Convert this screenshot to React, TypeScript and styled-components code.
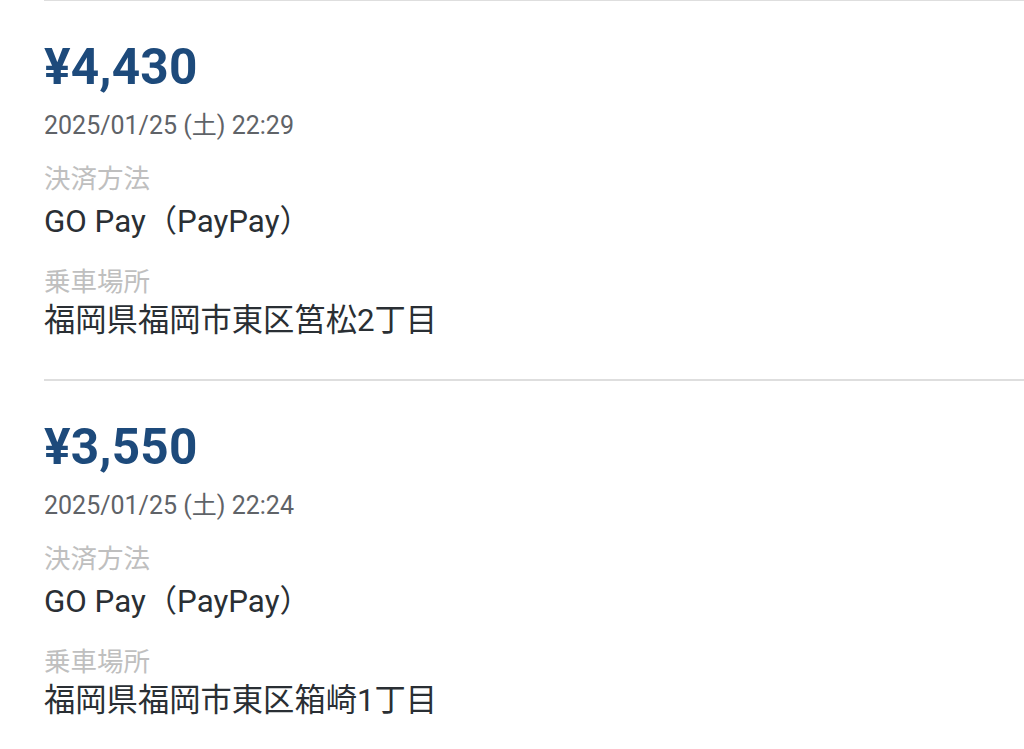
import React from "react";
import styled, { createGlobalStyle } from "styled-components";

const GlobalStyle = createGlobalStyle`
  html, body {
    margin: 0;
    padding: 0;
    background: #ffffff;
  }
  body {
    font-family: Roboto, "Noto Sans CJK JP", sans-serif;
    -webkit-font-smoothing: antialiased;
  }
`;

const List = styled.div`
  margin-left: 44px;
  border-top: 1px solid #dedede;
  display: flex;
  flex-direction: column;
`;

const Item = styled.section<{ $last?: boolean }>`
  display: flex;
  flex-direction: column;
  padding: 38px 0 40px;
  border-bottom: ${(p) => (p.$last ? "none" : "2px solid #dedede")};
`;

const Price = styled.div`
  font-size: 49.5px;
  line-height: 56px;
  font-weight: 700;
  color: #1d4a7b;
  letter-spacing: 0.2px;
`;

const DateText = styled.div`
  margin-top: 16px;
  font-size: 25px;
  line-height: 30px;
  color: #5f6368;
`;

const Label = styled.div<{ $gap: number }>`
  margin-top: ${(p) => p.$gap}px;
  font-size: 26.5px;
  line-height: 32px;
  color: #bfbfbf;
`;

const Value = styled.div<{ $gap: number }>`
  margin-top: ${(p) => p.$gap}px;
  font-size: 31.3px;
  line-height: 36px;
  color: #2a2f34;
`;

type Ride = {
  price: string;
  date: string;
  payment: string;
  place: string;
};

const rides: Ride[] = [
  {
    price: "¥4,430",
    date: "2025/01/25 (土) 22:29",
    payment: "GO Pay（PayPay）",
    place: "福岡県福岡市東区筥松2丁目",
  },
  {
    price: "¥3,550",
    date: "2025/01/25 (土) 22:24",
    payment: "GO Pay（PayPay）",
    place: "福岡県福岡市東区箱崎1丁目",
  },
];

export default function App() {
  return (
    <>
      <GlobalStyle />
      <List>
        {rides.map((r, i) => (
          <Item key={i} $last={i === rides.length - 1}>
            <Price>{r.price}</Price>
            <DateText>{r.date}</DateText>
            <Label $gap={22}>決済方法</Label>
            <Value $gap={9}>{r.payment}</Value>
            <Label $gap={26}>乗車場所</Label>
            <Value $gap={5}>{r.place}</Value>
          </Item>
        ))}
      </List>
    </>
  );
}
